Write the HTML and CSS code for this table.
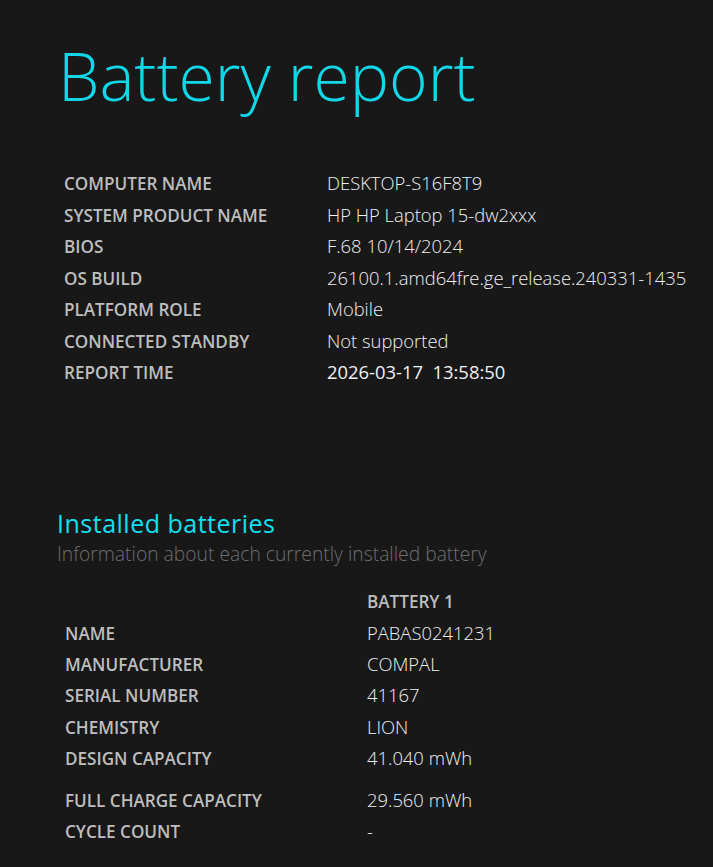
FILE: index.html
```html
<!DOCTYPE html>
<html>
<head>
<meta charset="utf-8">
<title>Battery report</title>
<link rel="stylesheet" href="styles.css">
</head>
<body>
<div class="page">
  <h1 class="title">Battery report</h1>
  <div class="info">
    <div class="label">Computer name</div><div class="value">DESKTOP-S16F8T9</div>
    <div class="label">System product name</div><div class="value">HP HP Laptop 15-dw2xxx</div>
    <div class="label">BIOS</div><div class="value">F.68 10/14/2024</div>
    <div class="label">OS build</div><div class="value">26100.1.amd64fre.ge_release.240331-1435</div>
    <div class="label">Platform role</div><div class="value">Mobile</div>
    <div class="label">Connected standby</div><div class="value">Not supported</div>
    <div class="label">Report time</div><div class="value time">2026-03-17&nbsp;&nbsp;13:58:50</div>
  </div>

  <h2 class="section">Installed batteries</h2>
  <div class="explanation">Information about each currently installed battery</div>

  <div class="batts">
    <div class="label"></div><div class="label head">Battery 1</div>
    <div class="label">Name</div><div class="value">PABAS0241231</div>
    <div class="label">Manufacturer</div><div class="value">COMPAL</div>
    <div class="label">Serial number</div><div class="value">41167</div>
    <div class="label">Chemistry</div><div class="value">LION</div>
    <div class="label">Design capacity</div><div class="value">41.040 mWh</div>
    <div class="label gap">Full charge capacity</div><div class="value gap">29.560 mWh</div>
    <div class="label">Cycle count</div><div class="value">-</div>
  </div>
</div>
</body>
</html>
```
FILE: styles.css
```css
html, body {
  margin: 0;
  padding: 0;
  background: #181818;
}
body {
  font-family: "Open Sans", "Noto Sans", sans-serif;
  color: #f0f0f0;
}
.page {
  padding: 0 0 0 57px;
}
.title {
  margin: 0 0 0 1px;
  padding-top: 28px;
  height: 104px;
  font-size: 66px;
  line-height: 94px;
  font-weight: 300;
  color: #11d8e8;
}
.info {
  display: grid;
  grid-template-columns: 263px auto;
  grid-auto-rows: 31.5px;
  margin-top: 35px;
  padding-left: 7px;
  align-items: baseline;
}
.info .label,
.info .value {
  line-height: 31.5px;
}
.label {
  font-size: 17.1px;
  font-weight: 600;
  color: #bebebe;
  text-transform: uppercase;
  white-space: nowrap;
}
.value {
  font-size: 18.4px;
  font-weight: 350;
  color: #f0f0f0;
  white-space: nowrap;
}
.value.time {
  font-weight: 450;
}
.section {
  margin: 120px 0 0 0;
  font-size: 25px;
  line-height: 31px;
  font-weight: 400;
  color: #11e0f0;
  letter-spacing: 0.02em;
}
.explanation {
  font-size: 19.3px;
  line-height: 30px;
  font-weight: 300;
  color: #6e6e6e;
}
.batts {
  display: grid;
  grid-template-columns: 302px auto;
  grid-template-rows: repeat(6, 31.3px) 41.7px 31.3px;
  margin-top: 17px;
  padding-left: 8px;
  align-items: baseline;
}
.batts .label,
.batts .value {
  line-height: 31.3px;
}
.batts .gap {
  padding-top: 10.4px;
}
```
